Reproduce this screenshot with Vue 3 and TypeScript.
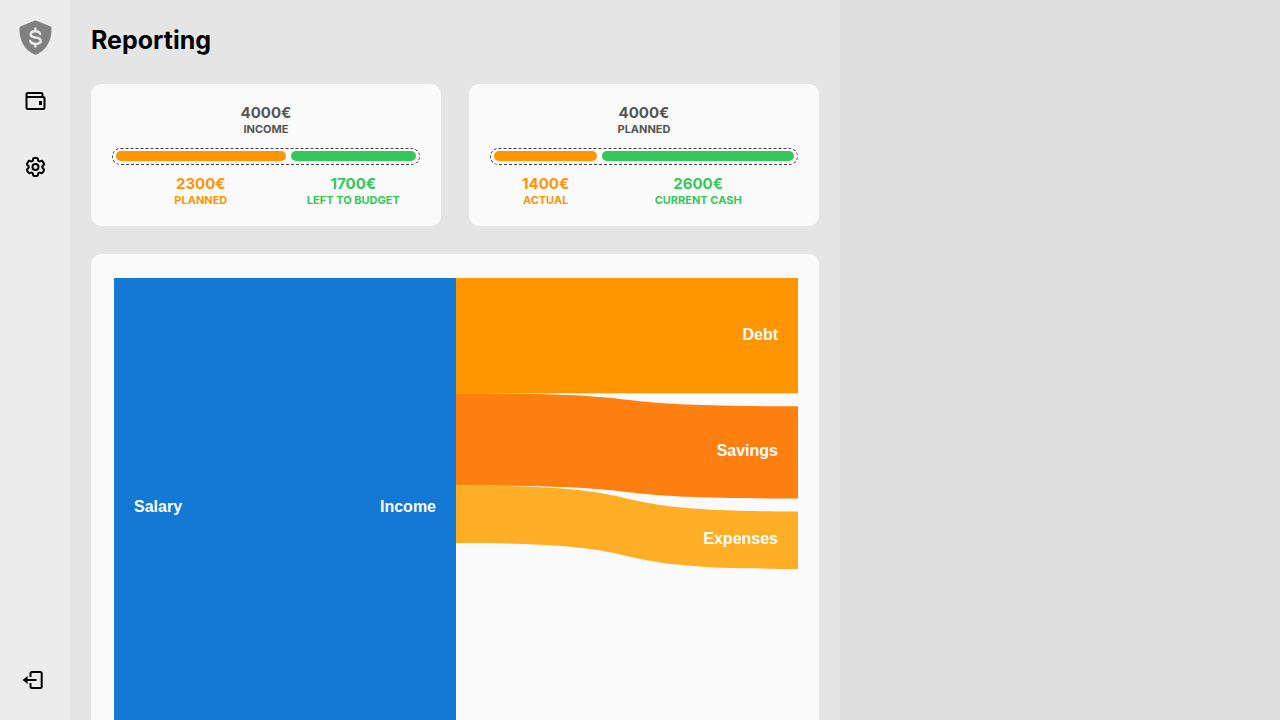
<script setup lang="ts">
interface Part {
  amount: number
  label: string
  tone: 'spent' | 'left'
}

interface Summary {
  total: number
  label: string
  parts: Part[]
}

interface Target {
  name: string
  amount: number
  color: string
}

const summaries: Summary[] = [
  {
    total: 4000,
    label: 'Income',
    parts: [
      { amount: 2300, label: 'Planned', tone: 'spent' },
      { amount: 1700, label: 'Left to budget', tone: 'left' },
    ],
  },
  {
    total: 4000,
    label: 'Planned',
    parts: [
      { amount: 1400, label: 'Actual', tone: 'spent' },
      { amount: 2600, label: 'Current cash', tone: 'left' },
    ],
  },
]

const targets: Target[] = [
  { name: 'Debt', amount: 1000, color: '#ff9500' },
  { name: 'Savings', amount: 800, color: '#ff7f11' },
  { name: 'Expenses', amount: 500, color: '#ffae25' },
]

// Sankey geometry, in viewBox units
const income = 4000
const top = 3
const left = 2
const middle = 344
const right = 686
const flowHeight = 461
const spacing = 13
const unit = flowHeight / income

let fromY = top
let toY = top
const flows = targets.map((t) => {
  const h = t.amount * unit
  const a = middle + ((right - middle) * 2) / 3
  const b = middle + (right - middle) / 3
  const d =
    `M${middle} ${fromY}C${a} ${fromY} ${b} ${toY} ${right} ${toY}` +
    `V${toY + h}C${b} ${toY + h} ${a} ${fromY + h} ${middle} ${fromY + h}Z`
  const flow = { ...t, d, labelY: Math.round(toY + h / 2) + 4 }
  fromY += h
  toY += h + spacing
  return flow
})
const incomeLabelY = Math.round(top + flowHeight / 2) + 3
</script>

<template>
  <div class="app">
    <nav class="sidebar" aria-label="Main">
      <a class="link" href="#reporting" aria-label="Home">
        <svg class="logo" viewBox="0 0 34 36" aria-hidden="true">
          <path
            d="M16.4 .7Q17.5 .2 18.6 .7L32.2 6.2Q33.4 6.800 33.500 8.400C33.900 20 28.600 29.500 19.200 34.200Q17.500 35.100 15.800 34.200C6.400 29.500 1.100 20 1.500 8.400Q1.600 6.800 2.800 6.200Z"
            fill="#808080"
          />
          <path
            d="M17.400 8.500V11M17.400 24V26.500M22.300 13.900Q21.200 11.200 17.400 11.200Q12.700 11.200 12.700 14.400Q12.700 16.800 17.500 17.400Q22.800 18.200 22.800 20.800Q22.800 23.900 17.700 23.900Q13.200 23.900 12.200 21"
            fill="none"
            stroke="#ececec"
            stroke-width="2.4"
            stroke-linecap="round"
          />
        </svg>
      </a>
      <a class="link wallet" href="#wallet" aria-label="Wallet">
        <svg class="icon" viewBox="0 0 24 24" aria-hidden="true">
          <path d="M19.500 7.500V5.500Q19.500 4 18 4H5Q3.500 4 3.500 5.500V18.500Q3.500 20 5 20H20Q21.500 20 21.500 18.500V9.500Q21.500 8 20 8H3.500" />
          <path class="clasp" d="M17.500 12V16" />
        </svg>
      </a>
      <a class="link settings" href="#settings" aria-label="Settings">
        <svg class="icon" viewBox="-0.5 0 24 24" aria-hidden="true">
          <path
            d="M9.594 3.94c.09-.542.56-.94 1.11-.94h2.593c.55 0 1.02.398 1.11.94l.213 1.281c.063.374.313.686.645.87.074.04.147.083.22.127.325.196.72.257 1.075.124l1.217-.456a1.125 1.125 0 0 1 1.37.49l1.296 2.247a1.125 1.125 0 0 1-.26 1.431l-1.003.827c-.293.241-.438.613-.43.992a7.723 7.723 0 0 1 0 .255c-.008.378.137.75.43.991l1.004.827c.424.35.534.955.26 1.43l-1.298 2.247a1.125 1.125 0 0 1-1.369.491l-1.217-.456c-.355-.133-.75-.072-1.076.124a6.47 6.47 0 0 1-.22.128c-.331.183-.581.495-.644.869l-.213 1.281c-.09.543-.56.94-1.11.94h-2.594c-.55 0-1.019-.398-1.11-.94l-.213-1.281c-.062-.374-.312-.686-.644-.87a6.52 6.52 0 0 1-.22-.127c-.325-.196-.72-.257-1.076-.124l-1.217.456a1.125 1.125 0 0 1-1.369-.49l-1.297-2.247a1.125 1.125 0 0 1 .26-1.431l1.004-.827c.292-.24.437-.613.43-.991a6.932 6.932 0 0 1 0-.255c.007-.38-.138-.751-.43-.992l-1.004-.827a1.125 1.125 0 0 1-.26-1.43l1.297-2.247a1.125 1.125 0 0 1 1.37-.491l1.216.456c.356.133.751.072 1.076-.124.072-.044.146-.086.22-.128.332-.183.582-.495.644-.869l.214-1.28Z"
          />
          <circle cx="12" cy="12" r="3" />
        </svg>
      </a>
      <a class="link logout" href="#logout" aria-label="Log out">
        <svg class="icon" viewBox="0 0 24 24" aria-hidden="true">
          <path d="M7.500 9V5.500Q7.500 4 9 4H17.200Q18.700 4 18.700 5.500V18.500Q18.700 20 17.200 20H9Q7.500 20 7.500 18.500V15" />
          <path d="M3 12H13.500" />
          <path class="solid" d="M-.4 12L4.600 8V16Z" />
        </svg>
      </a>
    </nav>

    <main class="content">
      <h1 class="title">Reporting</h1>

      <div class="summaries">
        <section v-for="s in summaries" :key="s.label" class="card summary">
          <div class="figure total">
            <span class="amount">{{ s.total }}€</span>
            <span class="label">{{ s.label }}</span>
          </div>
          <div class="bar">
            <span
              v-for="p in s.parts"
              :key="p.label"
              class="segment"
              :class="p.tone"
              :style="{ flexGrow: p.amount }"
            ></span>
          </div>
          <div class="parts">
            <div
              v-for="p in s.parts"
              :key="p.label"
              class="figure part"
              :class="p.tone"
              :style="{ flexGrow: p.amount }"
            >
              <span class="amount">{{ p.amount }}€</span>
              <span class="label">{{ p.label }}</span>
            </div>
          </div>
        </section>
      </div>

      <section class="card flow">
        <svg class="sankey" viewBox="0 0 686 467" role="img" aria-label="Income flow">
          <rect :x="left" :y="top" :width="middle - left" :height="flowHeight" fill="#1479d4" />
          <path v-for="f in flows" :key="f.name" :d="f.d" :fill="f.color" />
          <text :x="left + 20" :y="incomeLabelY">Salary</text>
          <text class="end" :x="middle - 20" :y="incomeLabelY">Income</text>
          <text v-for="f in flows" :key="f.name" class="end" :x="right - 20" :y="f.labelY">
            {{ f.name }}
          </text>
        </svg>
      </section>
    </main>
  </div>
</template>

<style>
body {
  margin: 0;
  background: #dedede;
}
</style>

<style scoped>
.app {
  display: grid;
  grid-template-columns: 70px minmax(0, 770px);
  height: 100vh;
  font-family: Inter, "Liberation Sans", sans-serif;
  color: #000;
}

.sidebar {
  display: flex;
  flex-direction: column;
  align-items: center;
  box-sizing: border-box;
  height: 100vh;
  padding: 20px 0 28px;
  background: #ececec;
}

.link {
  display: flex;
  color: #000;
}

.logo {
  width: 34px;
  height: 36px;
}

.icon {
  width: 24px;
  height: 24px;
  overflow: visible;
  fill: none;
  stroke: currentColor;
  stroke-width: 2;
}

.clasp {
  stroke-width: 3;
}

.solid {
  fill: currentColor;
  stroke: none;
}

.wallet {
  margin-top: 33px;
}

.settings {
  margin-top: 42px;
}

.logout {
  margin-top: auto;
}

.content {
  box-sizing: border-box;
  height: 100vh;
  padding: 24px 21px;
  overflow-y: auto;
  scrollbar-width: none;
  background: #e5e5e5;
}

.title {
  margin: 0 0 28px;
  font-size: 25px;
  line-height: 32px;
  font-weight: 700;
}

.summaries {
  display: grid;
  grid-template-columns: 1fr 1fr;
  gap: 28px;
  margin-bottom: 28px;
}

.card {
  border-radius: 10px;
  background: #fafafa;
}

.summary {
  padding: 20px 21px 18px;
}

.figure {
  display: flex;
  flex-direction: column;
  align-items: center;
  font-weight: 700;
  white-space: nowrap;
}

.total {
  color: #555;
}

.amount {
  font-size: 15px;
  line-height: 17px;
}

.label {
  font-size: 11px;
  line-height: 16px;
  text-transform: uppercase;
}

.bar {
  display: flex;
  gap: 5px;
  margin: 11px 0 10px;
  padding: 2px 3px 3px;
  border: 1px dashed #444;
  border-radius: 9px;
}

.segment {
  flex: 1 1 0;
  height: 10px;
  border-radius: 5px;
}

.segment.spent {
  background: #ff9500;
}

.segment.left {
  background: #34c759;
}

.parts {
  display: flex;
  gap: 5px;
  padding: 0 4px;
}

.part {
  flex: 1 1 0;
  min-width: 0;
}

.part.spent {
  color: #ff9500;
}

.part.left {
  color: #34c759;
}

.flow {
  padding: 21px;
}

.sankey {
  display: block;
  width: 100%;
}

.sankey text {
  fill: #fff;
  font-family: "Liberation Sans", Arial, sans-serif;
  font-size: 16px;
  font-weight: 700;
}

.sankey .end {
  text-anchor: end;
}
</style>
